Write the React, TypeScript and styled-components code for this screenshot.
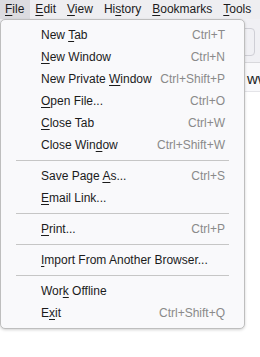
import React from "react";
import styled, { createGlobalStyle } from "styled-components";

const GlobalStyle = createGlobalStyle`
  html, body {
    margin: 0;
    padding: 0;
    background: #ffffff;
  }
  body {
    font-family: "Liberation Sans", Arial, sans-serif;
    font-size: 12px;
    color: #1b1b1b;
  }
`;

const Window = styled.div`
  position: relative;
  width: 260px;
  height: 357px;
  overflow: hidden;
  background: #ffffff;
`;

const MenuBar = styled.div`
  display: flex;
  height: 19px;
  background: #eeeef1;
`;

const BarItem = styled.div<{ open?: boolean }>`
  display: flex;
  align-items: center;
  padding: 0 6px 1px 5px;
  background: ${({ open }) => (open ? "#dcdce0" : "transparent")};
  white-space: nowrap;
`;

const Toolbar = styled.div`
  height: 43px;
  background: #f0f0f4;
  padding: 9px 5px 4px 8px;
  box-sizing: border-box;
`;

const UrlField = styled.div`
  height: 28px;
  border: 1px solid #cfcfd6;
  border-radius: 4px;
  background: #f0f0f4;
  box-sizing: border-box;
`;

const PageHead = styled.div`
  height: 30px;
  border-top: 1px solid #d8d8dc;
  border-bottom: 1px solid #e4e4e8;
  background: #f9f9fb;
  display: flex;
  align-items: center;
  padding: 2px 0 0 247px;
  overflow: hidden;
  white-space: nowrap;
  font-size: 15px;
  color: #222;
  box-sizing: border-box;
`;

const Menu = styled.div`
  position: absolute;
  top: 19px;
  left: 0;
  width: 245px;
  box-sizing: border-box;
  padding: 4px 0;
  background: #f9f9fb;
  border: 1px solid #bebebe;
  border-radius: 5px;
  box-shadow: 0 1px 3px rgba(0, 0, 0, 0.18);
`;

const Row = styled.div`
  display: flex;
  align-items: center;
  justify-content: space-between;
  height: 22px;
  padding: 0 19px 0 40px;
  white-space: nowrap;
`;

const Shortcut = styled.span`
  color: #8a8a8a;
`;

const Separator = styled.div`
  height: 1px;
  margin: 4px 15px;
  background: #c6c6c6;
`;

const Key = styled.span`
  text-decoration: underline;
  text-underline-offset: 2px;
`;

type Item = { label: string; key: number; shortcut?: string } | "sep";

const items: Item[] = [
  { label: "New Tab", key: 4, shortcut: "Ctrl+T" },
  { label: "New Window", key: 0, shortcut: "Ctrl+N" },
  { label: "New Private Window", key: 12, shortcut: "Ctrl+Shift+P" },
  { label: "Open File...", key: 0, shortcut: "Ctrl+O" },
  { label: "Close Tab", key: 0, shortcut: "Ctrl+W" },
  { label: "Close Window", key: 9, shortcut: "Ctrl+Shift+W" },
  "sep",
  { label: "Save Page As...", key: 10, shortcut: "Ctrl+S" },
  { label: "Email Link...", key: 0 },
  "sep",
  { label: "Print...", key: 0, shortcut: "Ctrl+P" },
  "sep",
  { label: "Import From Another Browser...", key: 0 },
  "sep",
  { label: "Work Offline", key: 3 },
  { label: "Exit", key: 1, shortcut: "Ctrl+Shift+Q" },
];

const barItems = [
  { label: "File", key: 0 },
  { label: "Edit", key: 0 },
  { label: "View", key: 0 },
  { label: "History", key: 2 },
  { label: "Bookmarks", key: 0 },
  { label: "Tools", key: 0 },
];

function Access({ text, at }: { text: string; at: number }) {
  return (
    <span>
      {text.slice(0, at)}
      <Key>{text[at]}</Key>
      {text.slice(at + 1)}
    </span>
  );
}

export default function App() {
  return (
    <Window>
      <GlobalStyle />
      <MenuBar>
        {barItems.map((b, i) => (
          <BarItem key={b.label} open={i === 0}>
            <Access text={b.label} at={b.key} />
          </BarItem>
        ))}
      </MenuBar>
      <Toolbar>
        <UrlField />
      </Toolbar>
      <PageHead>www</PageHead>
      <Menu>
        {items.map((it, i) =>
          it === "sep" ? (
            <Separator key={i} />
          ) : (
            <Row key={i}>
              <Access text={it.label} at={it.key} />
              {it.shortcut && <Shortcut>{it.shortcut}</Shortcut>}
            </Row>
          )
        )}
      </Menu>
    </Window>
  );
}
